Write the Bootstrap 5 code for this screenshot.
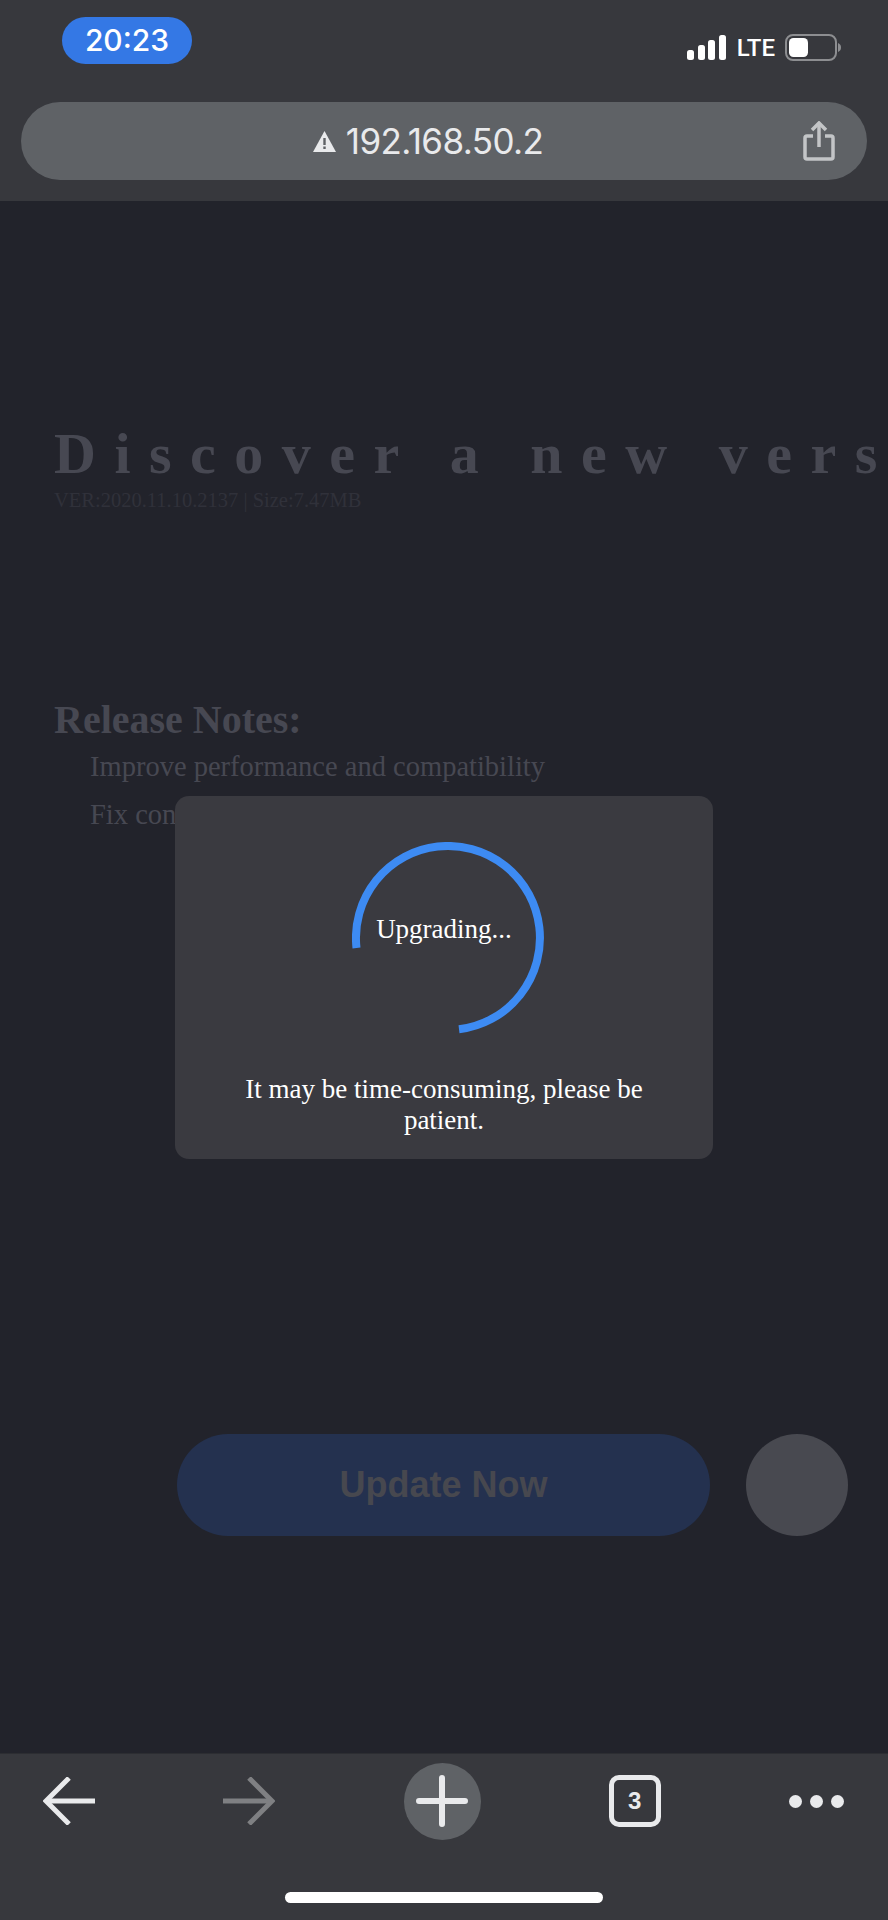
<!DOCTYPE html>
<html lang="en">
<head>
<meta charset="utf-8">
<title>Upgrade</title>
<link href="https://cdn.jsdelivr.net/npm/bootstrap@5.3.0/dist/css/bootstrap.min.css" rel="stylesheet">
<style>
html,body{height:1920px;overflow:hidden}
body{background:#22232b;font-family:"Liberation Serif",serif;position:relative;width:888px}
.screen{height:1920px;width:888px}
.topbar{background:#37383d;height:201px;flex:none;padding:17px 21px 21px}
.clockpill{background:#3478e5;color:#fff;width:130px;height:47px;margin-left:41px;border-radius:24px;font:500 30px/47px Inter,"Liberation Sans",sans-serif;text-align:center}
.stat{margin-top:17px;margin-right:25px;gap:10px;height:28px;color:#fff}
.lte{font:500 24px/28px Roboto,"Liberation Sans",sans-serif}
.urlbar{background:#5f6266;height:78px;border-radius:39px;margin-top:38px;color:#e9eaec;font:400 35px/78px Inter,"Liberation Sans",sans-serif;letter-spacing:-.6px;padding-right:32px;position:relative}
.urlmid{flex:1;padding-left:32px;gap:10px}
.content{flex:1;padding:220px 21px 0 54px;color:#474852}
.headline{font-size:58px;font-weight:700;line-height:66px;letter-spacing:18.5px;margin:0;white-space:nowrap}
.vers{font-size:20.5px;line-height:26px;color:#30313a;margin:0}
.notes-title{font-size:40px;font-weight:700;line-height:46px;margin:184px 0 0}
.notes-list{list-style:none;padding:0 0 0 36px;margin:0;font-size:28.5px;line-height:48px;color:#474852}
.actions{position:absolute;top:1434px;left:177px;gap:36px}
.updatebtn{width:533px;height:102px;border-radius:51px;background:#24314f;color:#47484f;font:700 36px/102px "Liberation Sans",sans-serif;text-align:center;border:0;padding:0}
.roundbtn{width:102px;height:102px;border-radius:50%;background:#484950;border:0;padding:0}
.dialogbox{position:absolute;left:175px;top:796px;width:538px;height:363px;background:#3a3a40;border-radius:14px;color:#fff;font-size:27px;line-height:31px;text-align:center}
.spinwrap{position:absolute;left:177px;top:46px;width:192px;height:192px}
.spinlabel{position:absolute;left:0;right:0;top:117px;font-size:27px;line-height:32px}
.patience{position:absolute;left:60px;right:60px;top:278px}
.botbar{background:#37383d;height:167px;flex:none;position:relative;border-top:1px solid #2c2d32}
.botrow{height:94px;padding:0 43px 0 43px}
.homebar{width:318px;height:11px;background:#fff;border-radius:6px;margin:44px auto 0}
.plusdisc{width:77px;height:77px;background:#5f6266;border-radius:50%}
.tabnum{width:52px;height:52px;border:5px solid #e9eaec;border-radius:10px;color:#e9eaec;font:700 24px/42px "Liberation Sans",sans-serif;text-align:center}
.dotset{gap:8px;width:56px}
.dotset i{display:block;width:13px;height:13px;border-radius:50%;background:#e9eaec}
</style>
</head>
<body>
<div class="screen d-flex flex-column">
  <header class="topbar">
    <div class="d-flex justify-content-between align-items-start">
      <div class="clockpill">20:23</div>
      <div class="stat d-flex align-items-center">
        <svg width="40" height="26" viewBox="0 0 40 26" fill="#fff"><rect x="0" y="15" width="7" height="10" rx="2.5"/><rect x="11" y="10" width="7" height="15" rx="2.5"/><rect x="21" y="5" width="7" height="20" rx="2.5"/><rect x="32" y="0" width="7" height="25" rx="2.5"/></svg>
        <span class="lte">LTE</span>
        <svg width="57" height="28" viewBox="0 0 57 28"><rect x="1" y="1" width="50" height="25" rx="7" fill="none" stroke="#8d8e91" stroke-width="2"/><rect x="4" y="4" width="19" height="19" rx="4.5" fill="#fff"/><path d="M53 9c2.500 1 3 3 3 4.500s-.5 3.500-3 4.500z" fill="#8d8e91"/></svg>
      </div>
    </div>
    <div class="urlbar d-flex align-items-center">
      <div class="urlmid d-flex justify-content-center align-items-center">
        <svg width="23" height="21" viewBox="0 0 23 21"><path d="M11.500 0L23 21H0z" fill="#e9eaec"/><path d="M10.300 7h2.400v7h-2.400zM10.300 15.500h2.400v2.500h-2.400z" fill="#5f6266"/></svg>
        <span>192.168.50.2</span>
      </div>
      <svg width="32" height="40" viewBox="0 0 32 40" fill="none" stroke="#c3c5c7" stroke-width="3.500"><path d="M10 15H4a2 2 0 0 0-2 2v19a2 2 0 0 0 2 2h24a2 2 0 0 0 2-2V17a2 2 0 0 0-2-2h-6"/><path d="M16 26V3"/><path d="M9 9l7-7 7 7"/></svg>
    </div>
  </header>
  <main class="content">
    <h1 class="headline">Discover a new version</h1>
    <p class="vers">VER:2020.11.10.2137 | Size:7.47MB</p>
    <h2 class="notes-title">Release Notes:</h2>
    <ul class="notes-list">
      <li>Improve performance and compatibility</li>
      <li>Fix content</li>
    </ul>
  </main>
  <footer class="botbar">
    <div class="botrow d-flex justify-content-between align-items-center">
      <svg width="52" height="48" viewBox="0 0 52 48" fill="none" stroke="#e9eaec" stroke-width="5"><path d="M52 24H4"/><path d="M26 1L3 24l0 0 23 23" stroke-linejoin="miter" transform="translate(0 0)"/></svg>
      <svg width="52" height="48" viewBox="0 0 52 48" fill="none" stroke="#7f8083" stroke-width="5"><path d="M0 24h48"/><path d="M26 1l23 23-23 23"/></svg>
      <div class="plusdisc d-flex align-items-center justify-content-center">
        <svg width="52" height="52" viewBox="0 0 52 52" stroke="#e9eaec" stroke-width="6" stroke-linecap="round"><path d="M26 3v46M3 26h46"/></svg>
      </div>
      <div class="tabnum">3</div>
      <div class="dotset d-flex"><i></i><i></i><i></i></div>
    </div>
    <div class="homebar"></div>
  </footer>
</div>
<div class="actions d-flex">
  <button class="updatebtn" type="button">Update Now</button>
  <button class="roundbtn" type="button" aria-label="Close"></button>
</div>
<div class="dialogbox">
  <svg class="spinwrap" viewBox="0 0 192 192" fill="none" stroke="#3d8bf3" stroke-width="8"><path d="M4.500 106A92 92 0 1 1 107 187.300"/></svg>
  <div class="spinlabel">Upgrading...</div>
  <div class="patience">It may be time-consuming, please be patient.</div>
</div>
</body>
</html>
